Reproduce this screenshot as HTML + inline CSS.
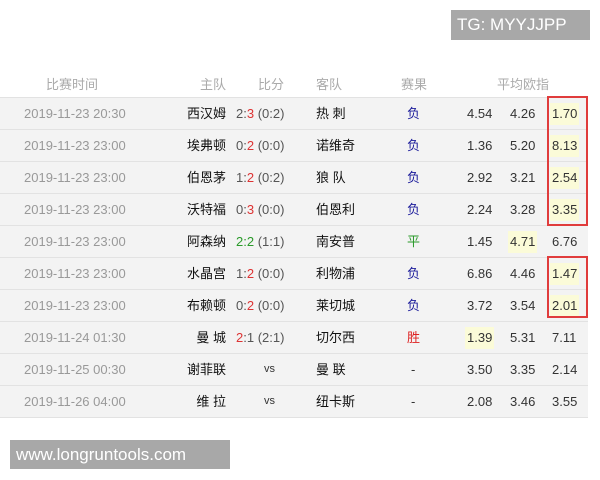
<!DOCTYPE html><html><head><meta charset="utf-8"><style>
body{margin:0;width:600px;height:480px;background:#fff;position:relative;overflow:hidden;font-family:"Liberation Sans","Noto Sans CJK SC",sans-serif;}
.h{position:absolute;top:74px;font-size:13px;color:#aaa;}
.r{position:absolute;left:0;width:588px;height:31px;background:#f3f3f3;border-bottom:1px solid #e2e2e2;font-size:13px;line-height:31px;}
.r span{position:absolute;top:0;}
.d{left:24px;color:#999;}
.hm{right:362px;color:#111;}
.sc{left:236px;color:#555;}
.aw{left:316px;color:#111;}
.re{left:407px;}
.o1,.o2,.o3{color:#333;}
.o1{left:467px}.o2{left:510px}.o3{left:552px}
.y{background:#fbfbd8;padding:0 2px;margin-left:-2px;line-height:22px;top:5px!important}
.box{position:absolute;border:2px solid #e03c3c;}
.lab{position:absolute;background:#a8a8a8;color:#fff;font-size:17px;}
i{font-style:normal;color:#d33}
</style></head><body>
<div class="lab" style="left:451px;top:10px;width:139px;height:30px;line-height:30px;padding-left:6px;box-sizing:border-box">TG: MYYJJPP</div>
<div class="h" style="left:46px">比赛时间</div>
<div class="h" style="left:200px">主队</div>
<div class="h" style="left:258px">比分</div>
<div class="h" style="left:316px">客队</div>
<div class="h" style="left:401px">赛果</div>
<div class="h" style="left:497px">平均欧指</div>
<div style="position:absolute;left:0;top:97px;width:588px;height:1px;background:#e2e2e2"></div>

<div class="r" style="top:98px"><span class="d">2019-11-23 20:30</span><span class="hm">西汉姆</span><span class="sc">2:<i>3</i> (0:2)</span><span class="aw">热 刺</span><span class="re" style="color:#1a1a9a">负</span><span class="o1">4.54</span><span class="o2">4.26</span><span class="o3 y">1.70</span></div>
<div class="r" style="top:130px"><span class="d">2019-11-23 23:00</span><span class="hm">埃弗顿</span><span class="sc">0:<i>2</i> (0:0)</span><span class="aw">诺维奇</span><span class="re" style="color:#1a1a9a">负</span><span class="o1">1.36</span><span class="o2">5.20</span><span class="o3 y">8.13</span></div>
<div class="r" style="top:162px"><span class="d">2019-11-23 23:00</span><span class="hm">伯恩茅</span><span class="sc">1:<i>2</i> (0:2)</span><span class="aw">狼 队</span><span class="re" style="color:#1a1a9a">负</span><span class="o1">2.92</span><span class="o2">3.21</span><span class="o3 y">2.54</span></div>
<div class="r" style="top:194px"><span class="d">2019-11-23 23:00</span><span class="hm">沃特福</span><span class="sc">0:<i>3</i> (0:0)</span><span class="aw">伯恩利</span><span class="re" style="color:#1a1a9a">负</span><span class="o1">2.24</span><span class="o2">3.28</span><span class="o3 y">3.35</span></div>
<div class="r" style="top:226px"><span class="d">2019-11-23 23:00</span><span class="hm">阿森纳</span><span class="sc" style="color:#2a9a2a">2:2 <span style="position:static;color:#555">(1:1)</span></span><span class="aw">南安普</span><span class="re" style="color:#2a9a2a">平</span><span class="o1">1.45</span><span class="o2 y">4.71</span><span class="o3">6.76</span></div>
<div class="r" style="top:258px"><span class="d">2019-11-23 23:00</span><span class="hm">水晶宫</span><span class="sc">1:<i>2</i> (0:0)</span><span class="aw">利物浦</span><span class="re" style="color:#1a1a9a">负</span><span class="o1">6.86</span><span class="o2">4.46</span><span class="o3 y">1.47</span></div>
<div class="r" style="top:290px"><span class="d">2019-11-23 23:00</span><span class="hm">布赖顿</span><span class="sc">0:<i>2</i> (0:0)</span><span class="aw">莱切城</span><span class="re" style="color:#1a1a9a">负</span><span class="o1">3.72</span><span class="o2">3.54</span><span class="o3 y">2.01</span></div>
<div class="r" style="top:322px"><span class="d">2019-11-24 01:30</span><span class="hm">曼 城</span><span class="sc"><i>2</i>:1 (2:1)</span><span class="aw">切尔西</span><span class="re" style="color:#d22">胜</span><span class="o1 y">1.39</span><span class="o2">5.31</span><span class="o3">7.11</span></div>
<div class="r" style="top:354px"><span class="d">2019-11-25 00:30</span><span class="hm">谢菲联</span><span class="sc" style="left:264px;font-size:11px;color:#333">vs</span><span class="aw">曼 联</span><span class="re" style="left:411px;color:#333">-</span><span class="o1">3.50</span><span class="o2">3.35</span><span class="o3">2.14</span></div>
<div class="r" style="top:386px"><span class="d">2019-11-26 04:00</span><span class="hm">维 拉</span><span class="sc" style="left:264px;font-size:11px;color:#333">vs</span><span class="aw">纽卡斯</span><span class="re" style="left:411px;color:#333">-</span><span class="o1">2.08</span><span class="o2">3.46</span><span class="o3">3.55</span></div>

<div class="box" style="left:547px;top:96px;width:37px;height:126px"></div>
<div class="box" style="left:547px;top:256px;width:37px;height:58px"></div>
<div class="lab" style="left:10px;top:440px;width:220px;height:29px;line-height:29px;padding-left:6px;box-sizing:border-box">www.longruntools.com</div>
</body></html>
